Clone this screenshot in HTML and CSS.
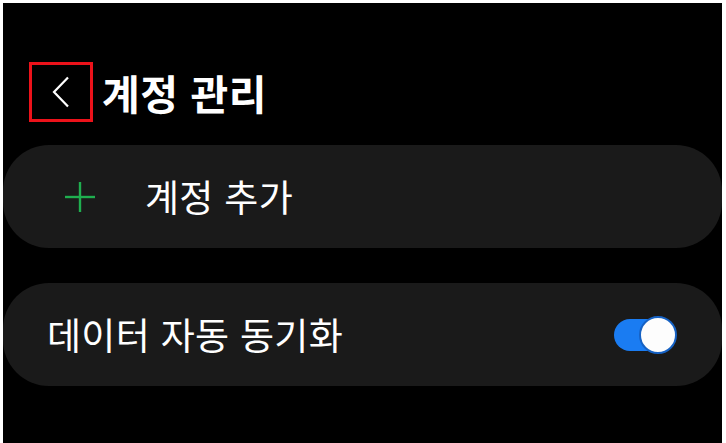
FILE: index.html
```html
<!DOCTYPE html>
<html lang="ko">

<head>
    <meta charset="UTF-8">
    <meta name="viewport" content="width=device-width, initial-scale=1.0">
    <title>계정 관리</title>
    <link rel="stylesheet" href="styles.css">
</head>

<body>
    <div class="screen">
        <div class="header">
            <div class="back-btn">
                <svg width="18" height="32" viewBox="0 0 18 32">
                    <polyline points="16,1.5 2,16 16,30.5" fill="none" stroke="#fff" stroke-width="2.2" />
                </svg>
            </div>
            <h1 class="title">계정 관리</h1>
        </div>

        <div class="card add-card">
            <svg class="plus" width="32" height="32" viewBox="0 0 32 32">
                <line x1="16" y1="1" x2="16" y2="31" stroke="#1fae4f" stroke-width="2.4" />
                <line x1="1" y1="16" x2="31" y2="16" stroke="#1fae4f" stroke-width="2.4" />
            </svg>
            <span class="label">계정 추가</span>
        </div>

        <div class="card sync-card">
            <span class="label">데이터 자동 동기화</span>
            <div class="toggle">
                <div class="knob"></div>
            </div>
        </div>
    </div>
</body>

</html>
```

FILE: styles.css
```css
body {
    margin: 0;
    padding: 0;
    background-color: #fff;
    font-family: 'Noto Sans CJK KR', 'Noto Sans', sans-serif;
}

.screen {
    margin: 3px 4px 0 3px;
    height: 440px;
    background-color: #000;
    color: #fff;
    overflow: hidden;
}

.header {
    display: flex;
    align-items: center;
    padding: 59px 0 0 26px;
}

.back-btn {
    width: 58px;
    height: 54px;
    border: 3px solid #ec121a;
    display: flex;
    align-items: center;
    justify-content: center;
}

.title {
    margin: 0 0 0 9px;
    font-size: 41px;
    font-weight: 700;
    line-height: 60px;
    letter-spacing: 0.5px;
}

.card {
    display: flex;
    align-items: center;
    height: 103px;
    background-color: #1a1a1a;
    border-radius: 46px;
}

.add-card {
    margin-top: 23px;
    padding-left: 61px;
}

.add-card .label {
    margin-left: 49px;
}

.sync-card {
    margin-top: 35px;
    padding: 0 46px 0 44px;
    justify-content: space-between;
}

.label {
    font-size: 37px;
    font-weight: 400;
    line-height: 1;
    letter-spacing: 0.3px;
}

.toggle {
    position: relative;
    width: 62px;
    height: 32px;
    border-radius: 16px;
    background-color: #1a7cf2;
}

.knob {
    position: absolute;
    right: -1px;
    top: -3px;
    width: 34px;
    height: 34px;
    border-radius: 50%;
    background-color: #fdfdfd;
    border: 2px solid #1662c4;
}
```
